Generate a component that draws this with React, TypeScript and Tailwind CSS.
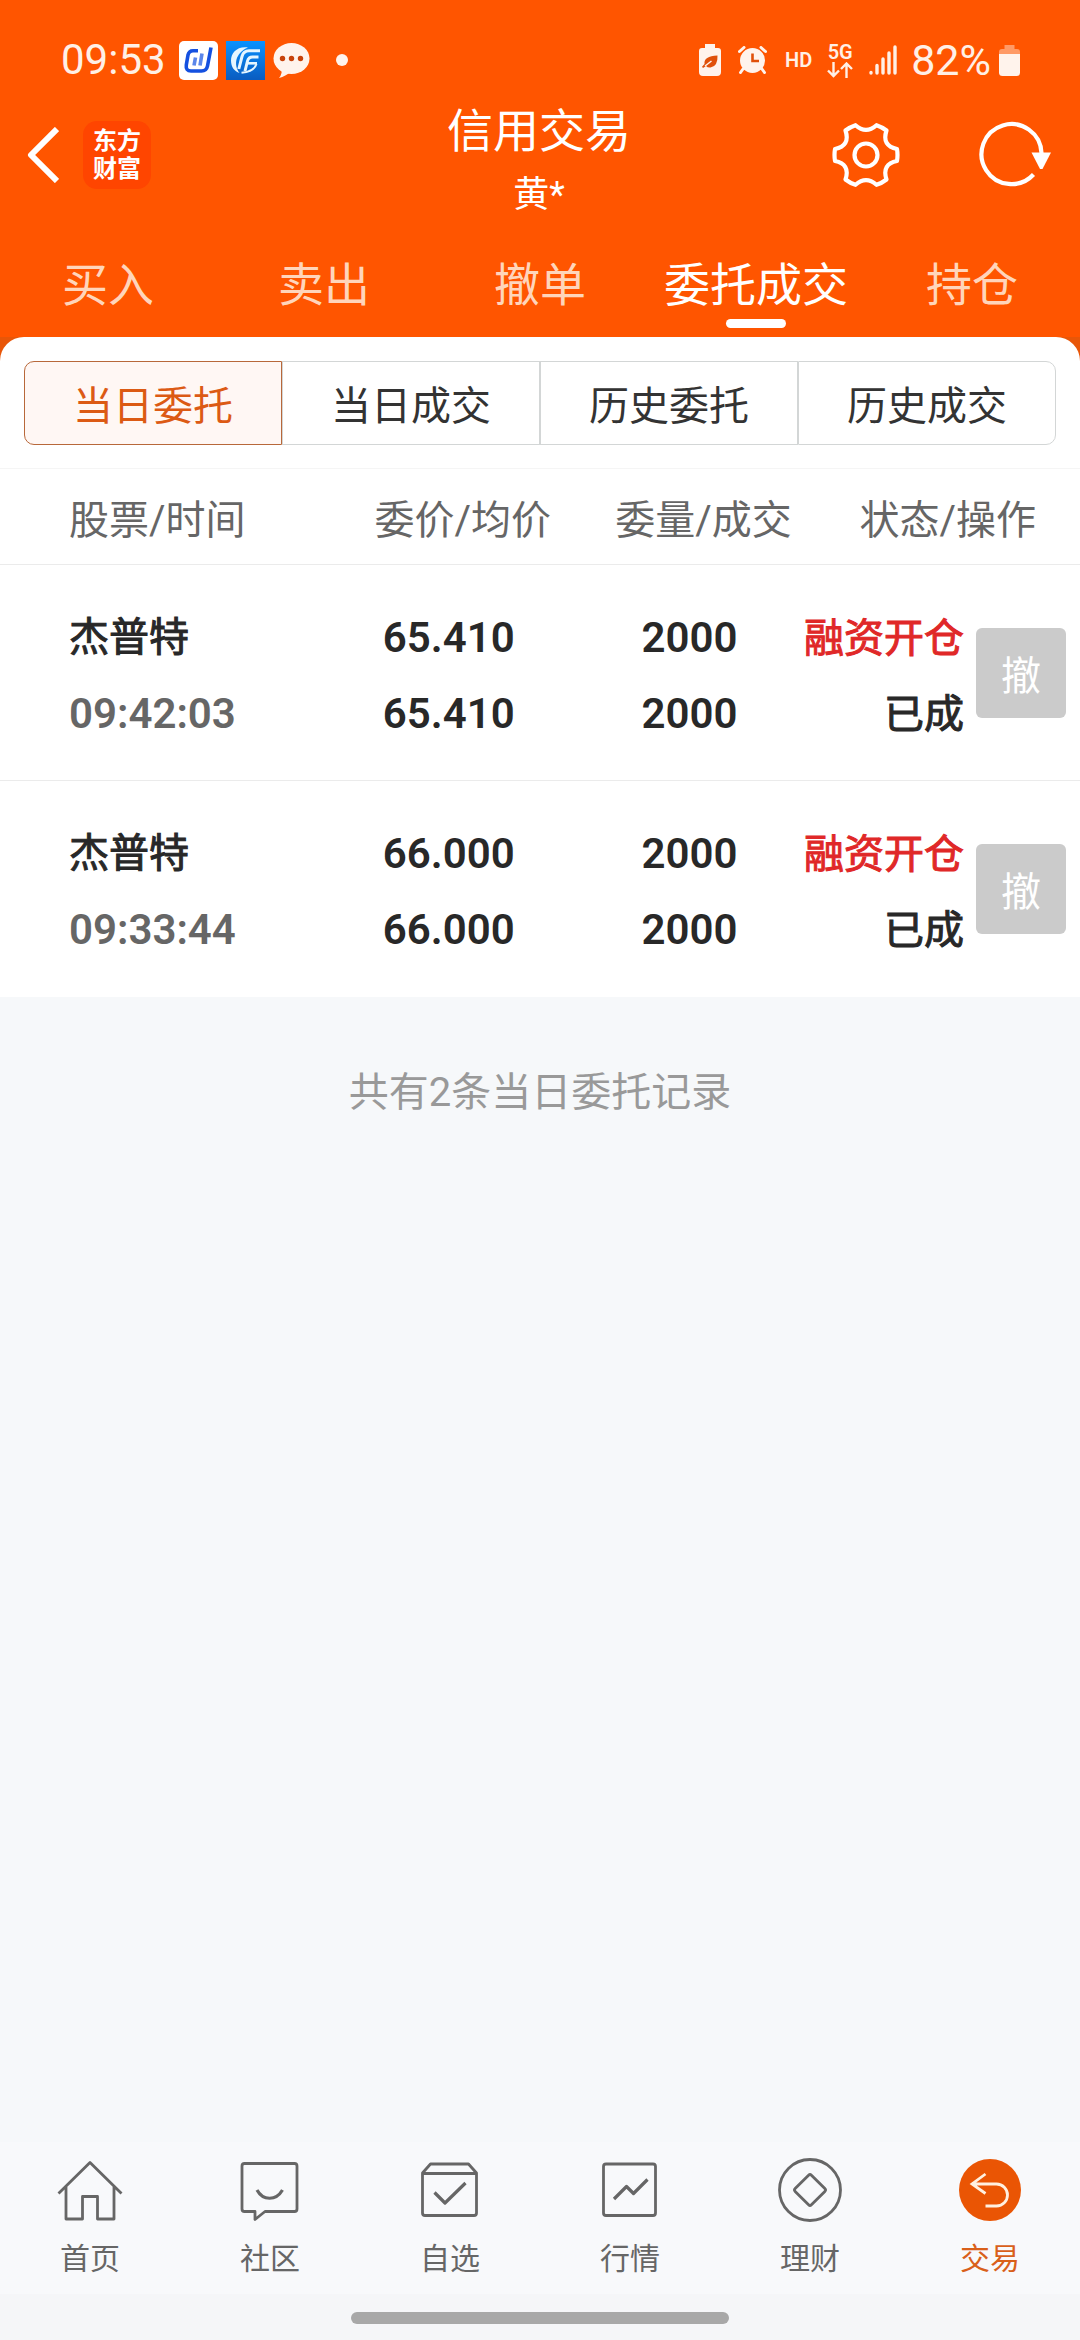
import type { ReactNode } from "react";

const tabs = ["买入", "卖出", "撤单", "委托成交", "持仓"];
const segments = ["当日委托", "当日成交", "历史委托", "历史成交"];
const orders = [
  { name: "杰普特", time: "09:42:03", price: "65.410", avg: "65.410", qty: "2000", filled: "2000", side: "融资开仓", state: "已成" },
  { name: "杰普特", time: "09:33:44", price: "66.000", avg: "66.000", qty: "2000", filled: "2000", side: "融资开仓", state: "已成" },
];

function StatusBar() {
  return (
    <div className="flex items-center justify-between pt-10 pr-[60px] pl-[61px] text-[#fff0e6]">
      <div className="flex h-10 items-center">
        <span className="w-[118px] text-[42px] leading-10">09:53</span>
        <svg className="h-[39px] w-[39px]" viewBox="0 0 39 39" aria-hidden="true">
          <rect width="39" height="39" rx="5" fill="#fff" />
          <g fill="none" strokeLinecap="butt" strokeLinejoin="round">
            <path d="M19 9.800H14Q10 9.800 9 14L7.300 24Q6.500 30 12 30H22.500Q27.500 30 28.500 25L32 6.500" stroke="#1450e0" strokeWidth="3.600" />
            <path d="M15 24.500L16.500 16.500M21 24.500L23 12.500" stroke="#5b86ea" strokeWidth="3.600" />
          </g>
        </svg>
        <svg className="ml-2 h-[39px] w-[39px]" viewBox="0 0 39 39" aria-hidden="true">
          <defs>
            <linearGradient id="appBlue" x1="0" y1="0" x2="0" y2="1">
              <stop offset="0" stopColor="#0a92ff" />
              <stop offset="1" stopColor="#0a5cc0" />
            </linearGradient>
          </defs>
          <rect width="39" height="39" fill="url(#appBlue)" />
          <path d="M22 6.500C11 5 5 12 5 19.500C5 26 8.500 30.500 13.500 32C7.500 24 9 12 22 6.500Z" fill="#e6f6ff" />
          <g fill="none" stroke="#e6f6ff">
            <path d="M34 9.800H23Q17.500 9.800 16 15.500L12.800 28" strokeWidth="3" />
            <path d="M32.500 16H26.500Q22.500 16 21.500 20L19 30" strokeWidth="3" />
            <path d="M21.500 22.300H31" strokeWidth="2.600" />
            <path d="M30.500 23Q28 30.500 15.500 31.800" strokeWidth="2" />
          </g>
        </svg>
        <svg className="ml-2 h-9 w-[37px]" viewBox="0 0 37 36" aria-hidden="true">
          <ellipse cx="18.500" cy="16.500" rx="18" ry="15.500" fill="#fff3ec" />
          <path d="M8 26Q10 31 6 36Q13 34 17 30Z" fill="#fff3ec" />
          <g fill="#c8420a">
            <circle cx="9.500" cy="16.500" r="2.700" />
            <circle cx="18.500" cy="16.500" r="2.700" />
            <circle cx="27.500" cy="16.500" r="2.700" />
          </g>
        </svg>
        <span className="ml-[26px] h-3 w-3 rounded-full bg-[#fff3ec]" />
      </div>

      <div className="flex h-10 items-center">
        <svg className="h-8 w-[22px]" viewBox="0 0 22 32" aria-hidden="true">
          <path d="M6 0H16V4H19Q22 4 22 7V28Q22 32 18 32H4Q0 32 0 28V7Q0 4 3 4H6Z" fill="#fff3ec" />
          <path d="M18.500 11.500Q19 22.500 11.500 23.500Q8.500 23.700 7 22L4 24L3 22.800L5.500 20Q4.500 12 18.500 11.500Z" fill="#e0500a" />
          <path d="M6 22L12.500 17" stroke="#fff3ec" strokeWidth="1.500" />
        </svg>
        <svg className="ml-[17px] h-7 w-[29px]" viewBox="0 0 29 28" aria-hidden="true">
          <circle cx="14.500" cy="14.500" r="12.500" fill="#fff3ec" />
          <path d="M1.500 5.500L6 1.500M27.500 5.500L23 1.500M5 23L2.500 26.500M24 23L26.500 26.500" stroke="#fff3ec" strokeWidth="3" strokeLinecap="round" />
          <path d="M14.500 7.500V15H21" stroke="#e0500a" strokeWidth="2.600" fill="none" />
        </svg>
        <span className="ml-[18px] text-[20px] leading-10 font-semibold">HD</span>
        <span className="ml-3.5 flex w-7 flex-col items-center">
          <span className="text-[20px] leading-5 font-semibold">5G</span>
          <svg className="h-4 w-[26px]" viewBox="0 0 26 16" fill="none" stroke="#fff0e6" strokeWidth="2.400" aria-hidden="true">
            <path d="M6.500 0V14M1 8.500L6.500 14L12 8.500M19.500 16V2M14 7L19.500 1.500L25 7" />
          </svg>
        </span>
        <svg className="ml-[15px] h-[30px] w-7" viewBox="0 0 28 30" fill="none" stroke="#fff0e6" strokeWidth="3.400" strokeLinecap="round" aria-hidden="true">
          <path d="M2 27.500V28M8 20.500V28M14 14V28M20 8V28M26 2V28" />
        </svg>
        <span className="ml-3.5 text-[43px] leading-10">82%</span>
        <svg className="ml-2 h-[31px] w-[21px]" viewBox="0 0 21 31" aria-hidden="true">
          <path d="M5.500 0H15.500V4H18Q21 4 21 7V9H0V7Q0 4 3 4H5.500Z" fill="#ff9a66" />
          <path d="M0 9H21V27.500Q21 31 17.500 31H3.500Q0 31 0 27.500Z" fill="#fff3ec" />
        </svg>
      </div>
    </div>
  );
}

function TitleBar() {
  return (
    <div className="grid h-[150px] grid-cols-[1fr_auto_1fr] items-center pr-7 pl-[26px] text-white">
      <div className="flex items-center gap-6">
        <button type="button" aria-label="返回">
          <svg className="h-14 w-[33px]" viewBox="0 0 33 56" fill="none" stroke="#fff" strokeWidth="6" strokeLinejoin="round" aria-hidden="true">
            <path d="M31 2L5 28L31 54" />
          </svg>
        </button>
        <div className="flex h-[68px] w-[68px] flex-col items-center justify-center rounded-[14px] bg-[#ff4500] text-[24px] leading-7 font-bold">
          <span>东方</span>
          <span>财富</span>
        </div>
      </div>
      <div className="flex flex-col items-center pt-4">
        <h1 className="text-[46px] leading-[64px] font-normal">信用交易</h1>
        <p className="text-[36px] leading-[64px]">黄*</p>
      </div>
      <div className="flex items-center justify-end gap-[78px]">
        <button type="button" aria-label="设置">
          <svg className="h-[68px] w-[68px]" viewBox="-34 -34 68 68" fill="none" stroke="#fff" strokeWidth="4.200" strokeLinejoin="round" aria-hidden="true">
            <path d="M-10.500 -29.800Q0 -20.500 10.500 -29.800Q16 -28 20.500 -24.500C17 -14 21 -8 31 -6Q32 0 31 6C21 8 17 14 20.500 24.500Q16 28 10.500 29.800Q0 20.500 -10.500 29.800Q-16 28 -20.500 24.500C-17 14 -21 8 -31 6Q-32 0 -31 -6C-21 -8 -17 -14 -20.500 -24.500Q-16 -28 -10.500 -29.800Z" />
            <circle r="11.500" />
          </svg>
        </button>
        <button type="button" aria-label="刷新">
          <svg className="h-[68px] w-[74px]" viewBox="0 0 74 68" aria-hidden="true">
            <path d="M55.500 53.500A30 30 0 1 1 63.500 32" fill="none" stroke="#fff" strokeWidth="4.200" />
            <path d="M53.500 31.500H73L64.500 48H62Z" fill="#fff" />
          </svg>
        </button>
      </div>
    </div>
  );
}

function NavIcon({ children }: { children: ReactNode }) {
  return (
    <svg className="h-16 w-[66px]" viewBox="0 0 66 64" fill="none" stroke="#666" strokeWidth="2.800" strokeLinejoin="round" aria-hidden="true">
      {children}
    </svg>
  );
}

const navItems: { label: string; active?: boolean; icon: ReactNode }[] = [
  {
    label: "首页",
    icon: <path d="M1.500 35.500L33 4.500L64.500 35.500M9 29V61H25.500V38.500H40.500V61H57V29" />,
  },
  {
    label: "社区",
    icon: (
      <>
        <path d="M7.500 5.500H57.500Q60 5.500 60 8V51Q60 53.500 57.500 53.500H28L18 61.500V53.500H7.500Q5 53.500 5 51V8Q5 5.500 7.500 5.500Z" />
        <path d="M20 32C26 43 39 43 45.500 32" strokeWidth="3.200" />
      </>
    ),
  },
  {
    label: "自选",
    icon: (
      <>
        <path d="M5.500 15L13.500 6H51.500L59.500 15V55Q59.500 57.500 57 57.500H8Q5.500 57.500 5.500 55ZM5.500 15.500H59.500" />
        <path d="M17.500 34.500L28 45L48.500 25" strokeWidth="3.200" />
      </>
    ),
  },
  {
    label: "行情",
    icon: (
      <>
        <rect x="6.500" y="6" width="52" height="51.500" rx="2.500" />
        <path d="M17 41L29.500 28.500L36.500 35.500L50.500 21.500" strokeWidth="3.200" />
      </>
    ),
  },
  {
    label: "理财",
    icon: (
      <>
        <circle cx="33" cy="32" r="30.500" />
        <rect x="21.500" y="20.500" width="23" height="23" rx="2" transform="rotate(45 33 32)" />
      </>
    ),
  },
  {
    label: "交易",
    active: true,
    icon: (
      <>
        <circle cx="33" cy="32" r="31" fill="#ea5504" stroke="none" />
        <path d="M28.500 16L15 26L28.500 35.500M15 26H39.500A11 11 0 0 1 39.500 48H28.500" stroke="#fff0e0" strokeLinejoin="miter" />
      </>
    ),
  },
];

export default function App() {
  return (
    <div className="flex min-h-screen flex-col bg-[#f6f8fa] font-[Roboto,'Noto_Sans_CJK_SC',sans-serif] text-[#282828]">
      <header className="bg-[#ff5500]">
        <StatusBar />
        <TitleBar />
        <nav className="grid grid-cols-5">
          {tabs.map((tab) => {
            const active = tab === "委托成交";
            return (
              <button
                key={tab}
                type="button"
                aria-current={active ? "page" : undefined}
                className={`flex flex-col items-center gap-1 pt-[25px] pb-[9px] text-[46px] leading-[60px] whitespace-nowrap ${active ? "text-white" : "text-[#ffd5bb]"}`}
              >
                {tab}
                <span className={`h-[9px] w-[60px] rounded-full ${active ? "bg-white" : ""}`} />
              </button>
            );
          })}
        </nav>
      </header>

      <main className="grow">
        <div className="bg-[#e85608]">
          <section className="rounded-t-[24px] bg-white">
            <div className="grid grid-cols-4 px-6 pt-6 pb-[23px]">
              {segments.map((segment, i) => (
                <button
                  key={segment}
                  type="button"
                  aria-pressed={i === 0}
                  className={`h-[84px] border pt-2 text-[40px] first:rounded-l-[10px] last:rounded-r-[10px] ${
                    i === 0 ? "border-[#b8683a] bg-[#fff7f4] text-[#dc5a14]" : "border-[#d3d6d6] text-[#333]"
                  }`}
                >
                  {segment}
                </button>
              ))}
            </div>

            <table className="w-full table-fixed border-separate border-spacing-0 whitespace-nowrap">
              <colgroup>
                <col className="w-[29.6%]" />
                <col className="w-[23.9%]" />
                <col className="w-[20.7%]" />
                <col className="w-[25.8%]" />
              </colgroup>
              <thead>
                <tr className="h-[97px] text-[40px] text-[#666] *:border-y *:border-t-[#f5f5f5] *:border-b-[#ebebeb]">
                  <th scope="col" className="pt-2 pl-[69px] text-left font-normal">股票/时间</th>
                  <th scope="col" className="pt-2 pl-7 text-center font-normal">委价/均价</th>
                  <th scope="col" className="pt-2 pl-7 text-center font-normal">委量/成交</th>
                  <th scope="col" className="pt-2 pr-11 text-right font-normal">状态/操作</th>
                </tr>
              </thead>
              <tbody>
                {orders.map((order) => (
                  <tr key={order.time} className="h-[216px] text-[42px] leading-[76px] font-semibold *:border-b *:border-[#ebebeb] last:*:border-b-0">
                    <td className="pt-1.5 pl-[69px]">
                      <div className="text-[40px] font-normal [-webkit-text-stroke:1px_currentColor]">{order.name}</div>
                      <div className="text-[#666]">{order.time}</div>
                    </td>
                    <td className="pt-1.5 text-center">
                      <div>{order.price}</div>
                      <div>{order.avg}</div>
                    </td>
                    <td className="pt-1.5 text-center">
                      <div>{order.qty}</div>
                      <div>{order.filled}</div>
                    </td>
                    <td className="pr-3.5">
                      <div className="flex items-center justify-end gap-3">
                        <div className="pt-2 text-right text-[40px] font-normal [-webkit-text-stroke:1px_currentColor]">
                          <div className="text-[#e02828]">{order.side}</div>
                          <div>{order.state}</div>
                        </div>
                        <button type="button" disabled className="h-[90px] w-[90px] rounded-md bg-[#cbcbcb] pt-2 text-[40px] font-normal text-white">
                          撤
                        </button>
                      </div>
                    </td>
                  </tr>
                ))}
              </tbody>
            </table>
          </section>
        </div>
        <p className="pt-[66px] text-center text-[40px] leading-[60px] text-[#999]">共有2条当日委托记录</p>
      </main>

      <footer>
        <nav className="grid grid-cols-6 bg-[#f8f9fb] pt-4 pb-3">
          {navItems.map((item) => (
            <a
              key={item.label}
              href="#"
              aria-current={item.active ? "page" : undefined}
              className={`flex flex-col items-center gap-3.5 text-[30px] leading-[46px] ${item.active ? "text-[#d9601a]" : "text-[#666]"}`}
            >
              <NavIcon>{item.icon}</NavIcon>
              {item.label}
            </a>
          ))}
        </nav>
        <div className="flex h-[46px] justify-center bg-[#f5f6f8] pt-[18px]">
          <div className="h-3 w-[35%] rounded-full bg-[#a8a8a8]" />
        </div>
      </footer>
    </div>
  );
}
